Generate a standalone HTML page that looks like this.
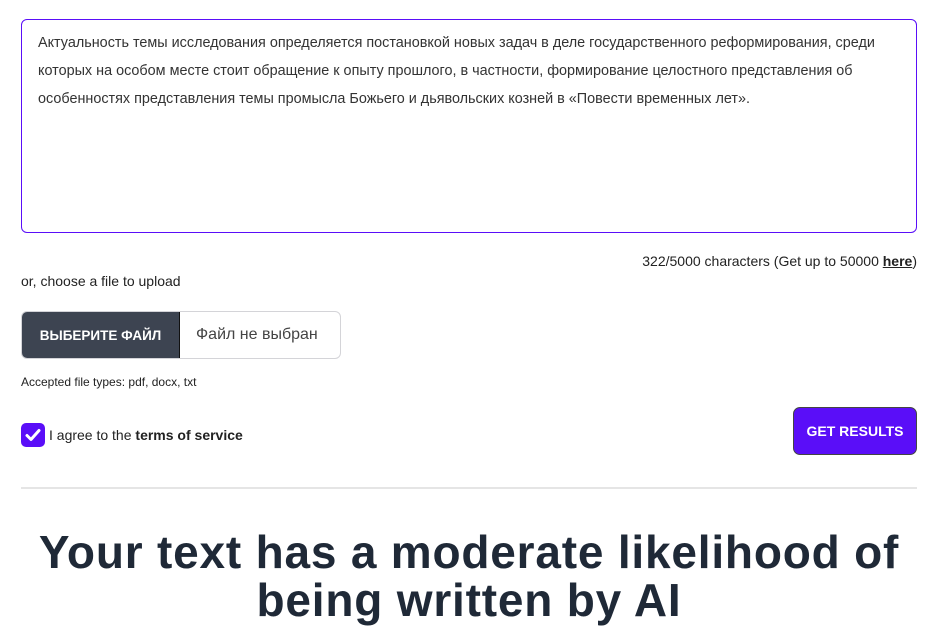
<!DOCTYPE html>
<html><head><meta charset="utf-8"><style>
*{box-sizing:border-box;margin:0;padding:0}
body{width:938px;height:643px;overflow:hidden;background:#fff;font-family:"Liberation Sans","DejaVu Sans",sans-serif;color:#222;}
.ta{position:absolute;left:21px;top:19px;width:896px;height:214px;border:1px solid #5a0ef8;border-radius:6px;padding:9px 16px;font-size:14.4px;line-height:28px;color:#333;}
.cnt{position:absolute;right:21px;top:253px;font-size:14px;color:#222;}
.cnt u{font-weight:bold}
.or{position:absolute;left:21px;top:273px;font-size:14px;}
.file{position:absolute;left:21px;top:311px;width:320px;height:48px;border:1px solid #d4d4d8;border-radius:6px;overflow:hidden;display:flex;}
.fb{width:158px;background:#3d4451;color:#fff;font-weight:bold;font-size:13.5px;display:flex;align-items:center;justify-content:center;border-right:1px solid #111}
.fn{flex:1;display:flex;align-items:center;padding-left:16px;font-size:16px;color:#444}
.acc{position:absolute;left:21px;top:375px;font-size:12px;}
.cb{position:absolute;left:21px;top:423px;width:24px;height:24px;border-radius:5px;background:#5a0ef8;}
.agree{position:absolute;left:49px;top:427px;font-size:14px;}
.btn{position:absolute;left:793px;top:407px;width:124px;height:48px;background:#5a0ef8;border:1px solid #444;border-radius:7px;color:#fff;font-weight:bold;font-size:14px;display:flex;align-items:center;justify-content:center}
.hr{position:absolute;left:21px;top:487px;width:896px;height:2px;background:#e5e5e5}
h1{position:absolute;left:0;top:528px;width:938px;text-align:center;font-size:46px;letter-spacing:0.8px;line-height:48px;font-weight:bold;color:#1f2937;white-space:nowrap}
</style></head><body>
<div class="ta">Актуальность темы исследования определяется постановкой новых задач в деле государственного реформирования, среди которых на особом месте стоит обращение к опыту прошлого, в частности, формирование целостного представления об особенностях представления темы промысла Божьего и дьявольских козней в «Повести временных лет».</div>
<div class="cnt">322/5000 characters (Get up to 50000 <u>here</u>)</div>
<div class="or">or, choose a file to upload</div>
<div class="file"><div class="fb">ВЫБЕРИТЕ ФАЙЛ</div><div class="fn">Файл не выбран</div></div>
<div class="acc">Accepted file types: pdf, docx, txt</div>
<div class="cb"><svg width="24" height="24" viewBox="0 0 24 24"><path d="M6 12.5l4 4 8-9" stroke="#fff" stroke-width="3" fill="none" stroke-linecap="round" stroke-linejoin="round"/></svg></div>
<div class="agree">I agree to the <b>terms of service</b></div>
<div class="btn">GET RESULTS</div>
<div class="hr"></div>
<h1>Your text has a moderate likelihood of<br>being written by AI</h1>
</body></html>
